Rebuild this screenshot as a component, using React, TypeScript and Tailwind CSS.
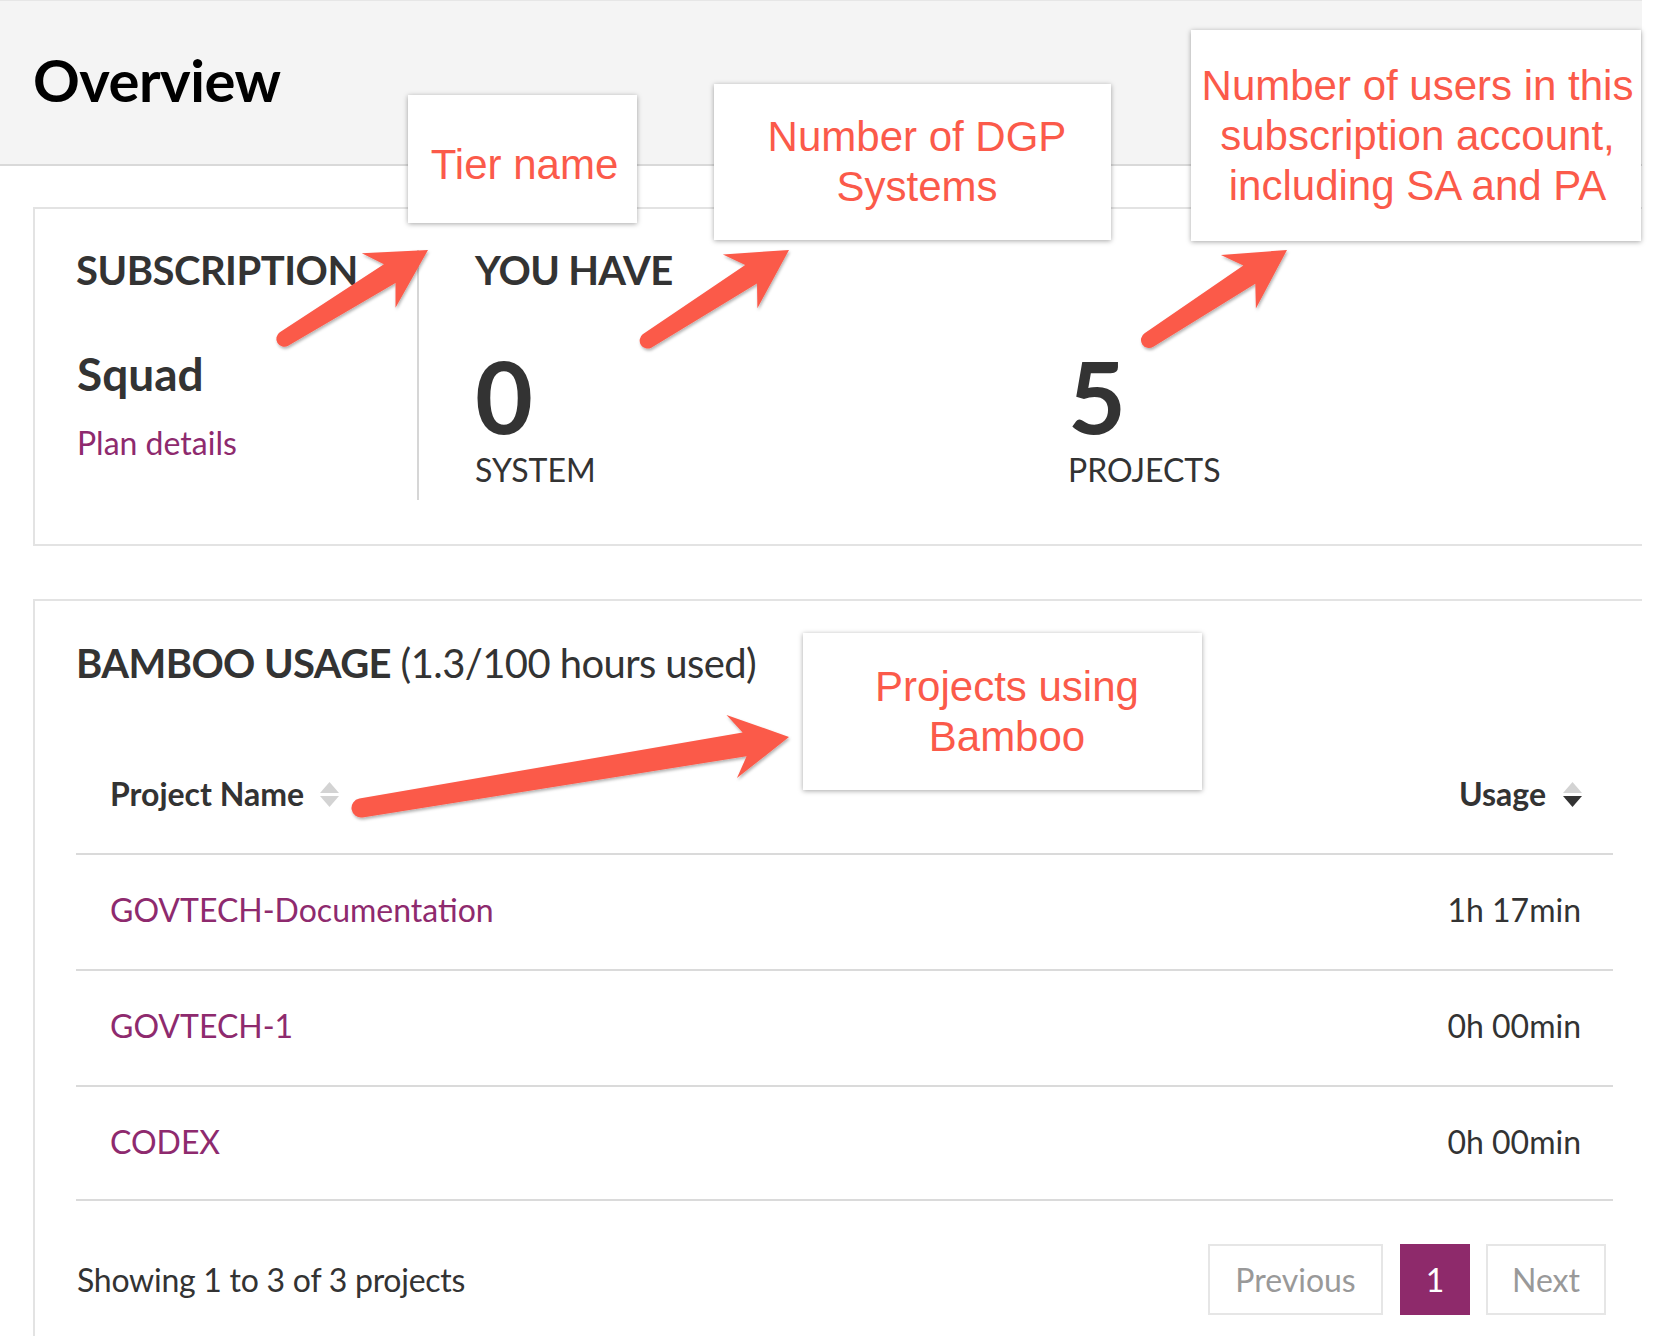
import React from "react";

type Pt = [number, number];

function arrowPath(tx: number, ty: number, px: number, py: number, w0: number, w1: number): string {
  const dx = px - tx;
  const dy = py - ty;
  const len = Math.hypot(dx, dy);
  const ux = dx / len;
  const uy = dy / len;
  const nx = -uy;
  const ny = ux;
  const back = (b: number, s: number): Pt => [px - ux * b + nx * s, py - uy * b + ny * s];
  const f = (p: Pt) => `${p[0].toFixed(1)} ${p[1].toFixed(1)}`;
  const neckL = back(45, -w1);
  const neckR = back(45, w1);
  const wingL = back(58, -32);
  const wingR = back(58, 32);
  const tailL: Pt = [tx - nx * w0, ty - ny * w0];
  const tailR: Pt = [tx + nx * w0, ty + ny * w0];
  return `M ${f(tailR)} L ${f(neckR)} L ${f(wingR)} L ${px} ${py} L ${f(wingL)} L ${f(neckL)} L ${f(tailL)} A ${w0} ${w0} 0 0 0 ${f(tailR)} Z`;
}

const arrows = [
  arrowPath(284, 339, 428, 250, 8, 11),
  arrowPath(647, 341, 789, 250, 8, 11),
  arrowPath(1149, 340, 1287, 250, 8, 11),
  arrowPath(361, 808, 789, 737, 9.5, 12),
];

function SortIcon({ up, down }: { up: string; down: string }) {
  return (
    <svg width="19" height="25" viewBox="0 0 19 25">
      <path d="M9.5 0 L19 11 L0 11 Z" fill={up} />
      <path d="M0 14 L19 14 L9.5 25 Z" fill={down} />
    </svg>
  );
}

export default function App() {
  return (
    <div className="relative w-[1656px] h-[1336px] overflow-hidden bg-white font-['Lato','Noto_Sans',sans-serif] text-[#333]">
      {/* Header */}
      <div className="w-[1642px] h-[166px] bg-[#f4f4f4] border-t border-t-[#e6e6e6] border-b-2 border-b-[#d9d9d9] pl-[33px] pt-[50px]">
        <h1 className="text-[58px] leading-none font-bold text-black tracking-[-0.5px]">Overview</h1>
      </div>

      {/* Subscription card */}
      <div className="ml-[33px] mt-[41px] w-[1609px] h-[339px] border-2 border-r-0 border-[#e3e3e3] flex pt-[41px]">
        <div className="w-[384px] h-[250px] pl-[42px] border-r-2 border-r-[#d6d6d6] flex flex-col">
          <div className="ml-[-1px] text-[40px] leading-none font-bold tracking-[-0.5px]">SUBSCRIPTION</div>
          <div className="mt-[61px] text-[46px] leading-none font-bold">Squad</div>
          <a className="mt-[30px] text-[32px] leading-none text-[#8e2a6e]">Plan details</a>
        </div>
        <div className="pl-[56px] flex flex-col">
          <div className="text-[40px] leading-none font-bold tracking-[-0.7px]">YOU HAVE</div>
          <div className="mt-[55px] flex">
            <div className="w-[593px] flex flex-col">
              <div className="text-[100px] leading-none font-bold">0</div>
              <div className="mt-[9px] text-[32px] leading-none">SYSTEM</div>
            </div>
            <div className="flex flex-col">
              <div className="text-[100px] leading-none font-bold">5</div>
              <div className="mt-[9px] text-[32px] leading-none">PROJECTS</div>
            </div>
          </div>
        </div>
      </div>

      {/* Bamboo usage card */}
      <div className="ml-[33px] mt-[53px] w-[1609px] h-[760px] border-t-2 border-l-2 border-[#e3e3e3] pt-[42px] pl-[41px] pr-[29px]">
        <div className="text-[40px] leading-none tracking-[-0.6px]">
          <span className="font-bold">BAMBOO USAGE</span> (1.3/100 hours used)
        </div>
        <div className="mt-[54px]">
          <div className="h-[118px] flex items-center justify-between border-b-2 border-b-[#dadada] pb-[2px]">
            <div className="pl-[34px] flex items-center gap-[16px]">
              <span className="text-[32px] leading-none font-bold">Project Name</span>
              <SortIcon up="#d3d3d3" down="#d3d3d3" />
            </div>
            <div className="pr-[31px] flex items-center gap-[17px]">
              <span className="text-[32px] leading-none font-bold">Usage</span>
              <SortIcon up="#d3d3d3" down="#333333" />
            </div>
          </div>
          <div className="h-[116px] pb-[4px] flex items-center justify-between border-b-2 border-b-[#dadada]">
            <a className="pl-[34px] text-[32px] leading-none text-[#8e2a6e]">GOVTECH-Documentation</a>
            <span className="pr-[32px] text-[32px] leading-none">1h 17min</span>
          </div>
          <div className="h-[116px] pb-[4px] flex items-center justify-between border-b-2 border-b-[#dadada]">
            <a className="pl-[34px] text-[32px] leading-none text-[#8e2a6e]">GOVTECH-1</a>
            <span className="pr-[32px] text-[32px] leading-none">0h 00min</span>
          </div>
          <div className="h-[114px] pb-[2px] flex items-center justify-between border-b-2 border-b-[#dadada]">
            <a className="pl-[34px] text-[32px] leading-none text-[#8e2a6e]">CODEX</a>
            <span className="pr-[32px] text-[32px] leading-none">0h 00min</span>
          </div>
        </div>
        <div className="mt-[43px] flex items-center justify-between pr-[7px]">
          <div className="pl-[1px] text-[32px] leading-none tracking-[-0.25px]">Showing 1 to 3 of 3 projects</div>
          <div className="flex items-center">
            <div className="w-[175px] h-[71px] border-2 border-[#e6e6e6] flex items-center justify-center text-[32px] leading-none text-[#999]">
              Previous
            </div>
            <div className="ml-[17px] w-[70px] h-[71px] bg-[#8e2a6b] flex items-center justify-center text-[32px] leading-none text-white">
              1
            </div>
            <div className="ml-[16px] w-[120px] h-[71px] border-2 border-[#e6e6e6] flex items-center justify-center text-[32px] leading-none text-[#999]">
              Next
            </div>
          </div>
        </div>
      </div>

      {/* Arrows overlay */}
      <svg className="absolute left-0 top-0 pointer-events-none" width="1656" height="1336" viewBox="0 0 1656 1336">
        <defs>
          <filter id="ash" x="-20%" y="-20%" width="140%" height="140%">
            <feDropShadow dx="1" dy="2" stdDeviation="1.8" floodColor="#000" floodOpacity="0.3" />
          </filter>
        </defs>
        {arrows.map((d, i) => (
          <path key={i} d={d} fill="#fb5a4a" filter="url(#ash)" />
        ))}
      </svg>

      {/* Annotation boxes */}
      <div className="absolute left-[408px] top-[95px] w-[229px] h-[128px] bg-white shadow-[0_1px_5px_rgba(0,0,0,0.35)] flex items-center justify-center pt-[12px] pl-[4px] font-['Liberation_Sans',Arial,sans-serif] text-[42px] leading-[50px] text-[#fb5a4a] text-center">
        Tier name
      </div>
      <div className="absolute left-[714px] top-[84px] w-[397px] h-[156px] bg-white shadow-[0_1px_5px_rgba(0,0,0,0.35)] flex items-center justify-center pl-[9px] font-['Liberation_Sans',Arial,sans-serif] text-[42px] leading-[50px] text-[#fb5a4a] text-center">
        <div>
          Number of DGP
          <br />
          Systems
        </div>
      </div>
      <div className="absolute left-[1191px] top-[30px] w-[450px] h-[211px] bg-white shadow-[0_1px_5px_rgba(0,0,0,0.35)] flex items-center justify-center pl-[3px] font-['Liberation_Sans',Arial,sans-serif] text-[42px] leading-[50px] text-[#fb5a4a] text-center whitespace-nowrap">
        <div>
          Number of users in this
          <br />
          subscription account,
          <br />
          including SA and PA
        </div>
      </div>
      <div className="absolute left-[803px] top-[633px] w-[399px] h-[157px] bg-white shadow-[0_1px_5px_rgba(0,0,0,0.35)] flex items-center justify-center pl-[9px] font-['Liberation_Sans',Arial,sans-serif] text-[42px] leading-[50px] text-[#fb5a4a] text-center">
        <div>
          Projects using
          <br />
          Bamboo
        </div>
      </div>
    </div>
  );
}
